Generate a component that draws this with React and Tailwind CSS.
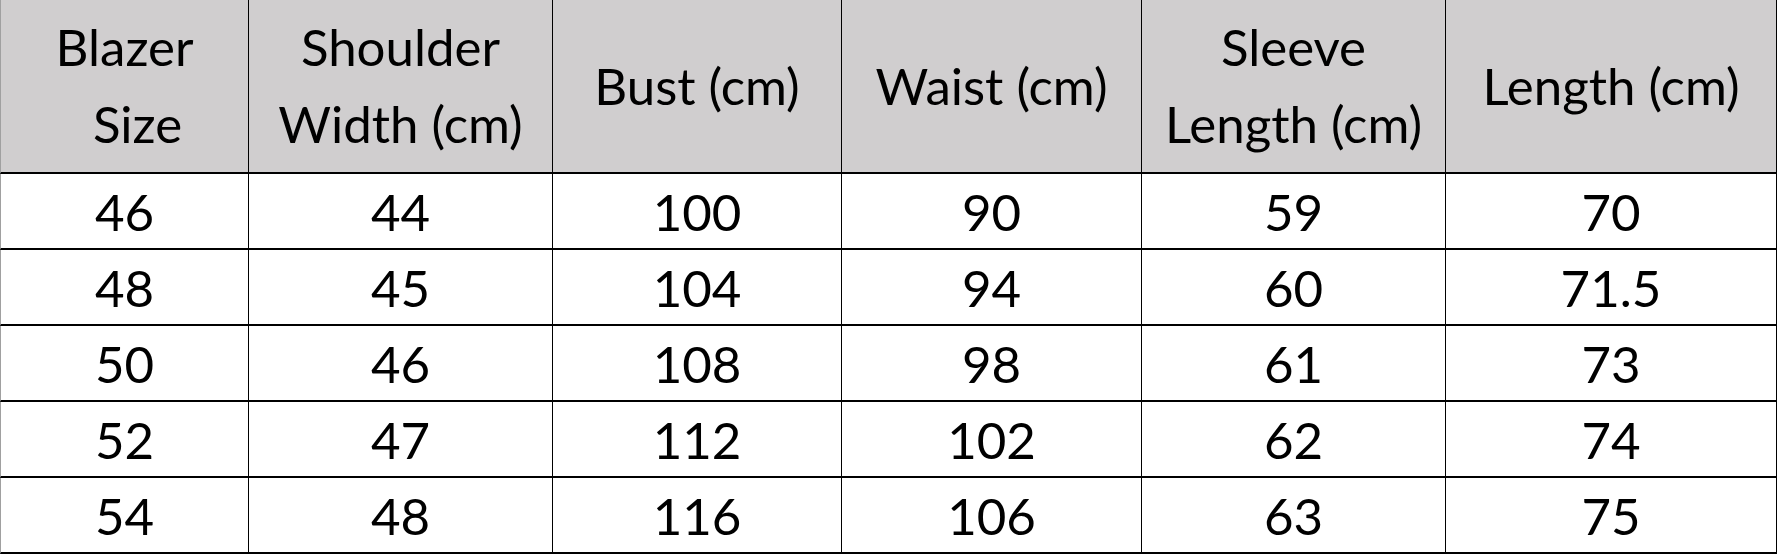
import React from "react"

const headers = [
  ["Blazer", "Size"],
  ["Shoulder", "Width (cm)"],
  ["Bust (cm)"],
  ["Waist (cm)"],
  ["Sleeve", "Length (cm)"],
  ["Length (cm)"],
]

const rows = [
  ["46", "44", "100", "90", "59", "70"],
  ["48", "45", "104", "94", "60", "71.5"],
  ["50", "46", "108", "98", "61", "73"],
  ["52", "47", "112", "102", "62", "74"],
  ["54", "48", "116", "106", "63", "75"],
]

export default function App() {
  return (
    <div
      className="w-[1777px] h-[557px] bg-white text-black overflow-hidden"
      style={{ fontFamily: "Lato, 'Liberation Sans', sans-serif" }}
    >
      <div className="grid grid-cols-[249px_304px_289px_300px_304px_331px] grid-rows-[174px_repeat(5,76px)] text-[51px]">
        {headers.map((lines, i) => (
          <div
            key={i}
            className={`flex flex-col items-center justify-center bg-[#d0cecf] border-b-2 border-r border-black leading-[77px] pb-[2px] ${
              i === 0 ? "border-l border-l-[#a0a0a0]" : ""
            }`}
          >
            {lines.map((line, j) => (
              <span key={j} className={i === 0 && j === 1 ? "ml-[26px]" : ""}>
                {line}
              </span>
            ))}
          </div>
        ))}
        {rows.map((row, r) =>
          row.map((val, c) => (
            <div
              key={`${r}-${c}`}
              className={`flex items-center justify-center border-b-2 border-r border-black pt-[3px] ${
                c === 0 ? "border-l border-l-[#a0a0a0]" : ""
              }`}
            >
              {val}
            </div>
          ))
        )}
      </div>
    </div>
  )
}
